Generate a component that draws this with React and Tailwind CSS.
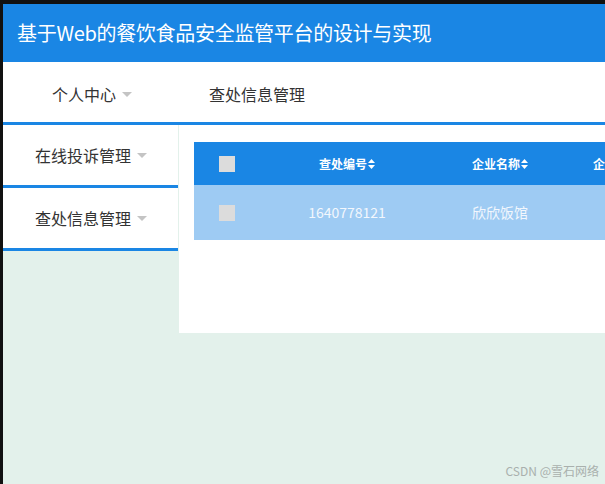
const FONT = { fontFamily: '"Noto Sans CJK SC", "Noto Sans", sans-serif' };

function Caret() {
  return (
    <svg width="10" height="6" viewBox="0 0 10 6" className="ml-[6px] mt-[2px]">
      <path d="M0 0 L10 0 L5 5 Z" fill="#c4c4c4" />
    </svg>
  );
}

function SortIcon() {
  return (
    <svg width="7" height="10" viewBox="0 0 7 10" className="ml-[1px]">
      <path d="M3.5 0 L7 4 L0 4 Z M0 6 L7 6 L3.5 10 Z" fill="#ffffff" />
    </svg>
  );
}

function Check() {
  return <span className="block w-4 h-4 bg-[#dcdcdc]"></span>;
}

export default function App() {
  return (
    <div className="w-[605px] h-[484px] bg-[#111] pt-1 pl-[3px] overflow-hidden" style={FONT}>
      <div className="h-full flex flex-col bg-[#e3f1eb] relative">
        {/* Header */}
        <div className="h-[58px] bg-[#1a86e4] flex items-center pl-[14px] text-white text-[20px] tracking-[-0.3px]">
          基于Web的餐饮食品安全监管平台的设计与实现
        </div>

        {/* Top nav */}
        <div className="h-[63px] bg-white border-b-[3px] border-[#1a86e4] flex items-center pt-[4px] text-[16px] text-[#333]">
          <div className="flex items-center pl-[49px]">
            个人中心<Caret />
          </div>
          <div className="ml-[77px]">查处信息管理</div>
        </div>

        <div className="flex items-start">
          {/* Sidebar */}
          <div className="w-[175px] shrink-0 text-[16px] text-[#333]">
            <div className="h-[63px] bg-white border-b-[3px] border-[#1a86e4] flex items-center pl-[32px]">
              在线投诉管理<Caret />
            </div>
            <div className="h-[63px] bg-white border-b-[3px] border-[#1a86e4] flex items-center pl-[32px]">
              查处信息管理<Caret />
            </div>
          </div>

          {/* Main */}
          <div className="flex-1 h-[208px] bg-white pt-[17px] pl-[15px] overflow-hidden ml-px">
            <div className="w-[520px]">
              <div className="h-[43px] bg-[#1a86e4] flex items-center text-white text-[12px] font-bold">
                <div className="w-[66px] flex justify-center"><Check /></div>
                <div className="w-[174px] flex justify-center items-center">查处编号<SortIcon /></div>
                <div className="w-[132px] flex justify-center items-center">企业名称<SortIcon /></div>
                <div className="w-[110px] flex justify-center items-center">企业地址<SortIcon /></div>
              </div>
              <div className="h-[55px] bg-[#9ecbf3] flex items-center text-[#f2f7fd] text-[14px]">
                <div className="w-[66px] flex justify-center"><Check /></div>
                <div className="w-[174px] text-center">1640778121</div>
                <div className="w-[132px] text-center">欣欣饭馆</div>
                <div className="w-[110px]"></div>
              </div>
            </div>
          </div>
        </div>

        <div className="absolute right-[6px] bottom-[4px] text-[12px] text-[#a9b0ad]">CSDN @雪石网络</div>
      </div>
    </div>
  );
}
